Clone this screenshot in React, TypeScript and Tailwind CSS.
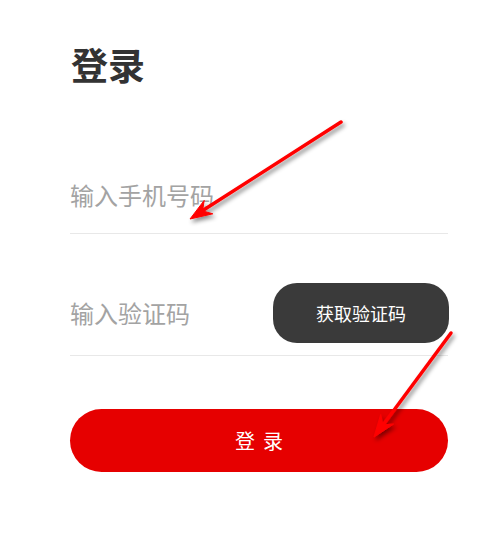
import React from "react";

const font = { fontFamily: '"Noto Sans CJK SC", "Noto Sans", sans-serif' };

export default function App() {
  return (
    <div className="relative w-[497px] h-[534px] bg-white overflow-hidden" style={font}>
      <div className="pl-[70px] pr-[49px] pt-[44px]">
        <h1 className="text-[37px] leading-[40px] font-bold text-[#333333] pl-[1px]">登录</h1>

        <div className="mt-[73px] h-[77px] flex items-center border-b border-[#e8e8e8]">
          <input
            className="w-full outline-none bg-transparent text-[24px] text-[#333] placeholder:text-[#a3a3a3]"
            style={font}
            placeholder="输入手机号码"
          />
        </div>

        <div className="mt-[37px] h-[85px] flex items-center justify-between border-b border-[#e8e8e8]">
          <input
            className="flex-1 min-w-0 outline-none bg-transparent text-[24px] text-[#333] placeholder:text-[#a3a3a3]"
            style={font}
            placeholder="输入验证码"
          />
          <button className="w-[176px] h-[60px] rounded-[24px] bg-[#3a3a3a] text-white text-[18px] flex items-center justify-center mr-[-1px]">
            获取验证码
          </button>
        </div>

        <button className="mt-[53px] w-full h-[63px] rounded-full bg-[#e60000] text-white text-[20px] tracking-[8px] pl-[8px] flex items-center justify-center">
          登录
        </button>
      </div>

      <svg className="absolute inset-0 pointer-events-none" width="497" height="534">
        <defs>
          <filter id="sh" x="-20%" y="-20%" width="140%" height="140%">
            <feDropShadow dx="2" dy="3" stdDeviation="2" floodColor="#000" floodOpacity="0.45" />
          </filter>
        </defs>
        <g filter="url(#sh)" fill="#ff0000" stroke="#ff0000">
          <line x1="341" y1="122" x2="202" y2="211" strokeWidth="3.5" strokeLinecap="round" />
          <polygon points="190,219 212.8,213.8 202.6,210.9 204.2,200.4" strokeWidth="1" strokeLinejoin="round" />
          <line x1="451" y1="333" x2="383" y2="425" strokeWidth="3.5" strokeLinecap="round" />
          <polygon points="374,437 393.5,424.1 382.9,424.9 380.7,414.5" strokeWidth="1" strokeLinejoin="round" />
        </g>
      </svg>
    </div>
  );
}
